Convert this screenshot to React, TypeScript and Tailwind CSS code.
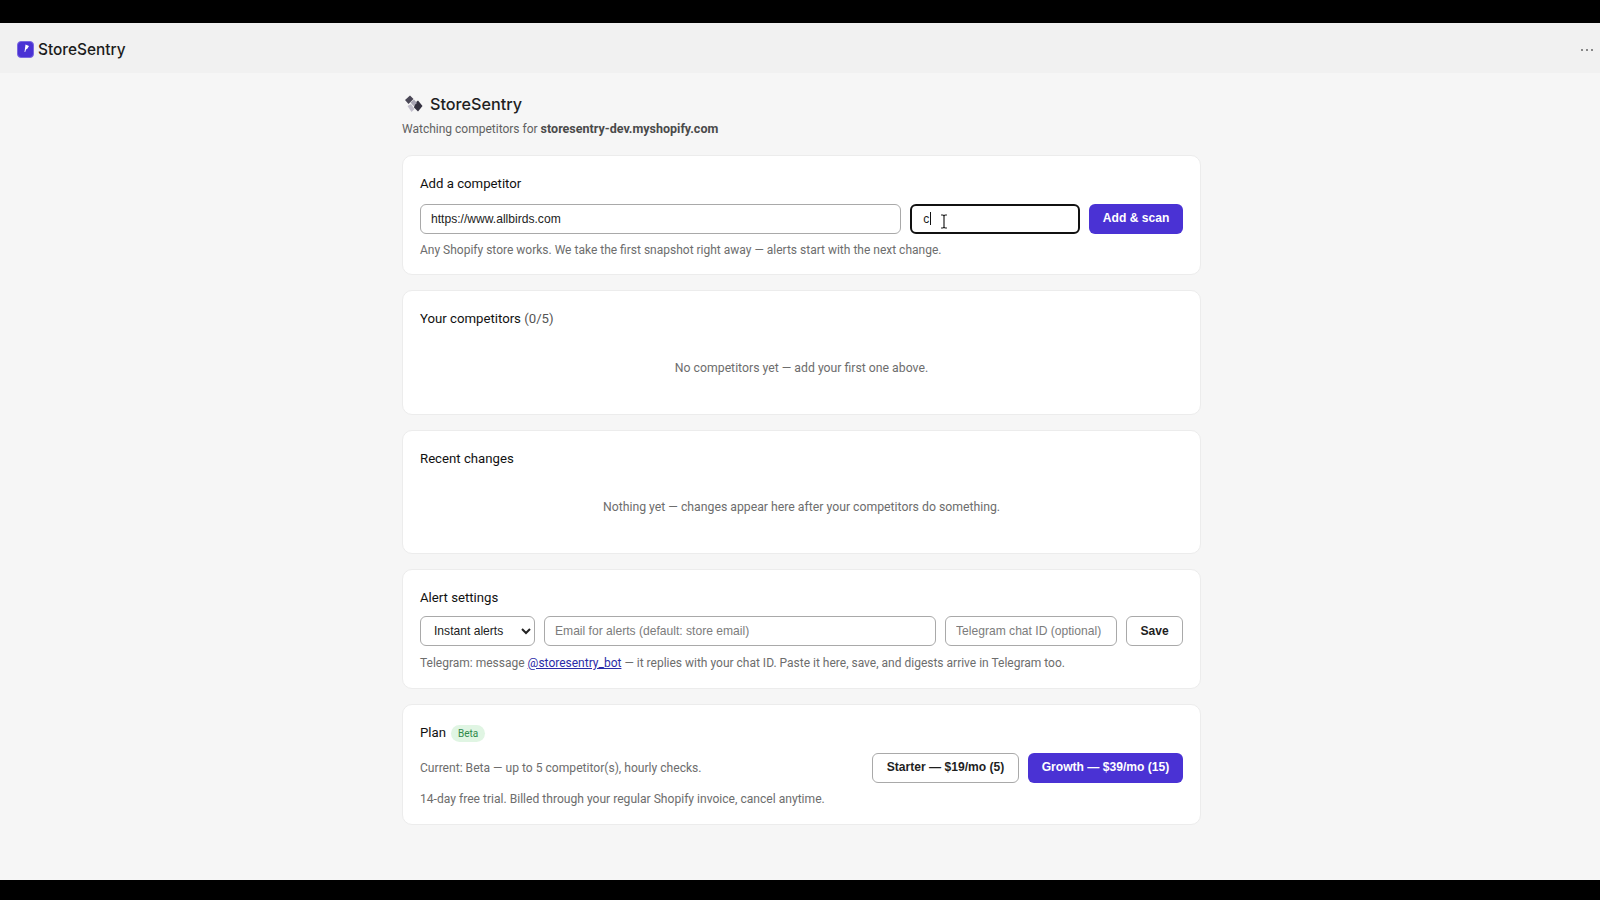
import React from 'react'

const body = "font-['Roboto','Liberation_Sans',sans-serif]"
const control = "h-[30px] rounded-[6px] bg-white px-[10px] font-['Liberation_Sans',sans-serif] text-[12.1px] text-[#222] placeholder:text-[#7c7c7c] outline-none"
const primaryBtn = "h-[30px] rounded-[6px] bg-[#4a32d4] font-['Liberation_Sans',sans-serif] text-[12.1px] font-bold text-white"
const outlineBtn = "h-[30px] rounded-[6px] border border-[#a9a9a9] bg-white font-['Liberation_Sans',sans-serif] text-[12.1px] font-bold text-[#1f1f1f]"
const hint = 'text-[12px] leading-[18px] text-[#6d6d6d]'
const planHint = 'text-[12.1px] leading-[18px] text-[#6d6d6d]'
const emptyHint = 'text-center text-[12.25px] leading-[18px] text-[#6d6d6d]'

const Card = ({ className = '', children }: { className?: string; children: React.ReactNode }) => (
  <section className={`w-[799px] rounded-[10px] border border-[#ececec] bg-white px-[17px] ${className}`}>
    {children}
  </section>
)

const CardTitle = ({ children }: { children: React.ReactNode }) => (
  <h2 className="text-[13.2px] font-normal leading-[18px] text-[#111]">{children}</h2>
)

// little satellite next to the page title
const SatelliteIcon = () => (
  <svg width="19" height="18" viewBox="0 0 19 18" aria-hidden="true">
    <path d="M1 5 L6 0.5 L9.5 4 L4.5 9 Z" fill="#4a4756" />
    <path d="M11 8 L14 5.5 L18.5 11 L14 16.5 L10 12.5 Z" fill="#353241" />
    <path d="M6.5 7.5 L10 4.5 L13 8 L9.5 11 Z" fill="#a9a6b5" />
    <path d="M3.5 11 L7 9 L10.5 14 L7.5 17 Z" fill="#c2bfcc" />
  </svg>
)

const AppIcon = () => (
  <svg width="17" height="17" viewBox="0 0 17 17" aria-hidden="true">
    <rect x="0.5" y="0.5" width="16" height="16" rx="3.5" fill="#4a32d4" stroke="#7b68e0" />
    <path d="M8.5 3.5 L12 5 L10.5 7.5 L9 8.5 L8.2 11 H7.5 Z" fill="#fff" />
  </svg>
)

const TextCursor = () => (
  <svg className="absolute left-[30px] top-[10px]" width="8" height="15" viewBox="0 0 8 15" aria-hidden="true">
    <path d="M1 1 H3 L4 2 L5 1 H7 M4 2 V13 M1 14 H3 L4 13 L5 14 H7" fill="none" stroke="#222" strokeWidth="1.2" />
  </svg>
)

export default function App() {
  return (
    <div className={`flex h-[900px] flex-col overflow-hidden bg-[#f6f6f6] ${body}`}>
      <div className="h-[23px] shrink-0 bg-black" />

      <header className="flex h-[50px] shrink-0 items-center justify-between bg-[#f1f1f1] pl-[17px] pr-[7px] pt-[3px]">
        <div className="flex items-center gap-[4px]">
          <AppIcon />
          <span className="font-['Inter',sans-serif] text-[15.4px] font-medium text-[#1c1c1c]">StoreSentry</span>
        </div>
        <span className="flex gap-[3px]">
          <i className="h-[2px] w-[2px] rounded-full bg-[#666]" />
          <i className="h-[2px] w-[2px] rounded-full bg-[#666]" />
          <i className="h-[2px] w-[2px] rounded-full bg-[#666]" />
        </span>
      </header>

      <main className="flex min-h-0 flex-1 flex-col items-center pl-[3px] pt-[20px]">
        <div className="w-[799px]">
          <div className="flex h-[22px] items-center gap-[7px] pl-[2px]">
            <SatelliteIcon />
            <h1 className="font-['Inter',sans-serif] text-[16.2px] font-medium text-[#1f1f1f]">StoreSentry</h1>
          </div>
          <p className="mt-[5px] text-[12px] leading-[18px] text-[#616161]">
            Watching competitors for <b className="text-[12.5px] font-bold text-[#4a4a4a]">storesentry-dev.myshopify.com</b>
          </p>
        </div>

        <div className="mt-[17px] flex flex-col gap-[15px]">
          <Card className="h-[120px] pt-[19px]">
            <CardTitle>Add a competitor</CardTitle>
            <div className="mt-[10.5px] flex gap-[9px]">
              <input className={`${control} w-[482px] border border-[#a9a9a9]`} defaultValue="https://www.allbirds.com" />
              <div className="relative">
                <input className={`${control} w-[170px] border-2 border-[#111] pl-[11px]`} defaultValue="c" />
                <i className="absolute left-[20px] top-[8px] h-[13px] w-px bg-[#111]" />
                <TextCursor />
              </div>
              <button className={`${primaryBtn} w-[94px]`}>Add &amp; scan</button>
            </div>
            <p className={`mt-[7.5px] ${hint}`}>
              Any Shopify store works. We take the first snapshot right away — alerts start with the next change.
            </p>
          </Card>

          <Card className="h-[124.5px] pt-[19px]">
            <CardTitle>
              Your competitors <span className="text-[#555]">(0/5)</span>
            </CardTitle>
            <p className={`mt-[31px] ${emptyHint}`}>No competitors yet — add your first one above.</p>
          </Card>

          <Card className="h-[124.5px] pt-[19px]">
            <CardTitle>Recent changes</CardTitle>
            <p className={`mt-[30.5px] ${emptyHint}`}>
              Nothing yet — changes appear here after your competitors do something.
            </p>
          </Card>

          <Card className="h-[120px] pt-[18.5px]">
            <CardTitle>Alert settings</CardTitle>
            <div className="mt-[9.5px] flex gap-[9px]">
              <select className={`${control} w-[115px] border border-[#a9a9a9] pl-[9px] pr-0`} defaultValue="instant">
                <option value="instant">Instant alerts</option>
              </select>
              <input className={`${control} w-[392px] border border-[#a9a9a9]`} placeholder="Email for alerts (default: store email)" />
              <input className={`${control} w-[172px] border border-[#a9a9a9]`} placeholder="Telegram chat ID (optional)" />
              <button className={`${outlineBtn} w-[57px]`}>Save</button>
            </div>
            <p className={`mt-[8px] ${hint}`}>
              Telegram: message <a className="text-[#2b2ba8] underline">@storesentry_bot</a> — it replies with your chat ID. Paste it here, save, and digests arrive in Telegram too.
            </p>
          </Card>

          <Card className="h-[121px] pt-[19px]">
            <div className="flex items-center gap-[5px]">
              <CardTitle>Plan</CardTitle>
              <span className="rounded-full bg-[#e0f5e3] px-[7px] text-[10px] leading-[17px] text-[#2f8a4a]">Beta</span>
            </div>
            <div className="mt-[10.5px] flex items-center justify-between">
              <p className={planHint}>Current: Beta — up to 5 competitor(s), hourly checks.</p>
              <div className="flex gap-[9px]">
                <button className={`${outlineBtn} w-[147px]`}>Starter — $19/mo (5)</button>
                <button className={`${primaryBtn} w-[155px]`}>Growth — $39/mo (15)</button>
              </div>
            </div>
            <p className={`mt-[7.5px] ${planHint}`}>
              14-day free trial. Billed through your regular Shopify invoice, cancel anytime.
            </p>
          </Card>
        </div>
      </main>

      <div className="h-[20px] shrink-0 bg-black" />
    </div>
  )
}
